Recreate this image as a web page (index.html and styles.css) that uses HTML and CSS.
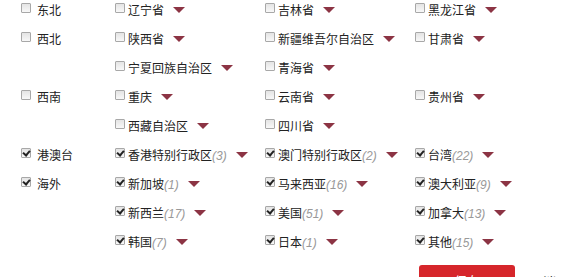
FILE: index.html
```html
<!DOCTYPE html>
<html lang="zh-CN">
<head>
<meta charset="utf-8">
<link rel="stylesheet" href="styles.css">
</head>
<body>
<div class="grid">
  <div class="item region"><span class="cb"></span><span class="lbl">东北</span></div>
  <div class="item"><span class="cb"></span><span class="lbl">辽宁省</span><span class="tri"></span></div>
  <div class="item"><span class="cb"></span><span class="lbl">吉林省</span><span class="tri"></span></div>
  <div class="item"><span class="cb"></span><span class="lbl">黑龙江省</span><span class="tri"></span></div>

  <div class="item region"><span class="cb"></span><span class="lbl">西北</span></div>
  <div class="item"><span class="cb"></span><span class="lbl">陕西省</span><span class="tri"></span></div>
  <div class="item"><span class="cb"></span><span class="lbl">新疆维吾尔自治区</span><span class="tri"></span></div>
  <div class="item"><span class="cb"></span><span class="lbl">甘肃省</span><span class="tri"></span></div>

  <div class="item region"></div>
  <div class="item"><span class="cb"></span><span class="lbl">宁夏回族自治区</span><span class="tri"></span></div>
  <div class="item"><span class="cb"></span><span class="lbl">青海省</span><span class="tri"></span></div>
  <div class="item"></div>

  <div class="item region"><span class="cb"></span><span class="lbl">西南</span></div>
  <div class="item"><span class="cb"></span><span class="lbl">重庆</span><span class="tri"></span></div>
  <div class="item"><span class="cb"></span><span class="lbl">云南省</span><span class="tri"></span></div>
  <div class="item"><span class="cb"></span><span class="lbl">贵州省</span><span class="tri"></span></div>

  <div class="item region"></div>
  <div class="item"><span class="cb"></span><span class="lbl">西藏自治区</span><span class="tri"></span></div>
  <div class="item"><span class="cb"></span><span class="lbl">四川省</span><span class="tri"></span></div>
  <div class="item"></div>

  <div class="item region"><span class="cb on"></span><span class="lbl">港澳台</span></div>
  <div class="item"><span class="cb on"></span><span class="lbl">香港特别行政区<i class="num">(3)</i></span><span class="tri"></span></div>
  <div class="item"><span class="cb on"></span><span class="lbl">澳门特别行政区<i class="num">(2)</i></span><span class="tri"></span></div>
  <div class="item"><span class="cb on"></span><span class="lbl">台湾<i class="num">(22)</i></span><span class="tri"></span></div>

  <div class="item region"><span class="cb on"></span><span class="lbl">海外</span></div>
  <div class="item"><span class="cb on"></span><span class="lbl">新加坡<i class="num">(1)</i></span><span class="tri"></span></div>
  <div class="item"><span class="cb on"></span><span class="lbl">马来西亚<i class="num">(16)</i></span><span class="tri"></span></div>
  <div class="item"><span class="cb on"></span><span class="lbl">澳大利亚<i class="num">(9)</i></span><span class="tri"></span></div>

  <div class="item region"></div>
  <div class="item"><span class="cb on"></span><span class="lbl">新西兰<i class="num">(17)</i></span><span class="tri"></span></div>
  <div class="item"><span class="cb on"></span><span class="lbl">美国<i class="num">(51)</i></span><span class="tri"></span></div>
  <div class="item"><span class="cb on"></span><span class="lbl">加拿大<i class="num">(13)</i></span><span class="tri"></span></div>

  <div class="item region"></div>
  <div class="item"><span class="cb on"></span><span class="lbl">韩国<i class="num">(7)</i></span><span class="tri"></span></div>
  <div class="item"><span class="cb on"></span><span class="lbl">日本<i class="num">(1)</i></span><span class="tri"></span></div>
  <div class="item"><span class="cb on"></span><span class="lbl">其他<i class="num">(15)</i></span><span class="tri"></span></div>
</div>
<div class="actions">
  <button class="save" type="button">保存</button>
  <a class="cancel" href="#">取消</a>
</div>
</body>
</html>
```
FILE: styles.css
```css
html, body {
  margin: 0;
  padding: 0;
  background: #fff;
  overflow: hidden;
}
body {
  width: 561px;
  height: 277px;
  font-family: "Noto Sans CJK SC", "Liberation Sans", sans-serif;
  font-size: 12px;
  color: #222;
}
.grid {
  display: grid;
  grid-template-columns: 94px 150px 150px 150px;
  grid-auto-rows: 29px;
  padding-left: 21px;
}
.item {
  display: flex;
  align-items: flex-start;
  white-space: nowrap;
}
.cb {
  flex: none;
  box-sizing: border-box;
  width: 10px;
  height: 10px;
  margin-top: 3px;
  margin-right: 3px;
  border: 1px solid #a8a8a8;
  border-radius: 1px;
  background: linear-gradient(#e4e4e4, #f8f8f8);
  position: relative;
}
.region .cb {
  margin-right: 6px;
}
.cb.on::after {
  content: "";
  position: absolute;
  left: 2px;
  top: 0px;
  width: 3px;
  height: 5px;
  border: solid #222;
  border-width: 0 2px 2px 0;
  transform: rotate(40deg);
}
.lbl {
  line-height: 17px;
  margin-top: 1px;
}
.num {
  font-family: "Liberation Sans", sans-serif;
  font-style: italic;
  color: #999;
  font-size: 12px;
}
.tri {
  flex: none;
  width: 0;
  height: 0;
  margin-left: 9px;
  margin-top: 7px;
  border-left: 6px solid transparent;
  border-right: 6px solid transparent;
  border-top: 6px solid #8c3444;
}
.actions {
  display: flex;
  align-items: flex-start;
  padding-left: 419px;
  margin-top: 4px;
}
.save {
  width: 96px;
  height: 32px;
  border: none;
  border-radius: 3px;
  background: #d6262b;
  color: #fff;
  font-family: "Noto Sans CJK SC", sans-serif;
  font-size: 13px;
  padding: 0;
  line-height: 32px;
}
.cancel {
  margin-left: 15px;
  margin-top: 7px;
  color: #222;
  text-decoration: none;
  font-size: 13px;
}
```
